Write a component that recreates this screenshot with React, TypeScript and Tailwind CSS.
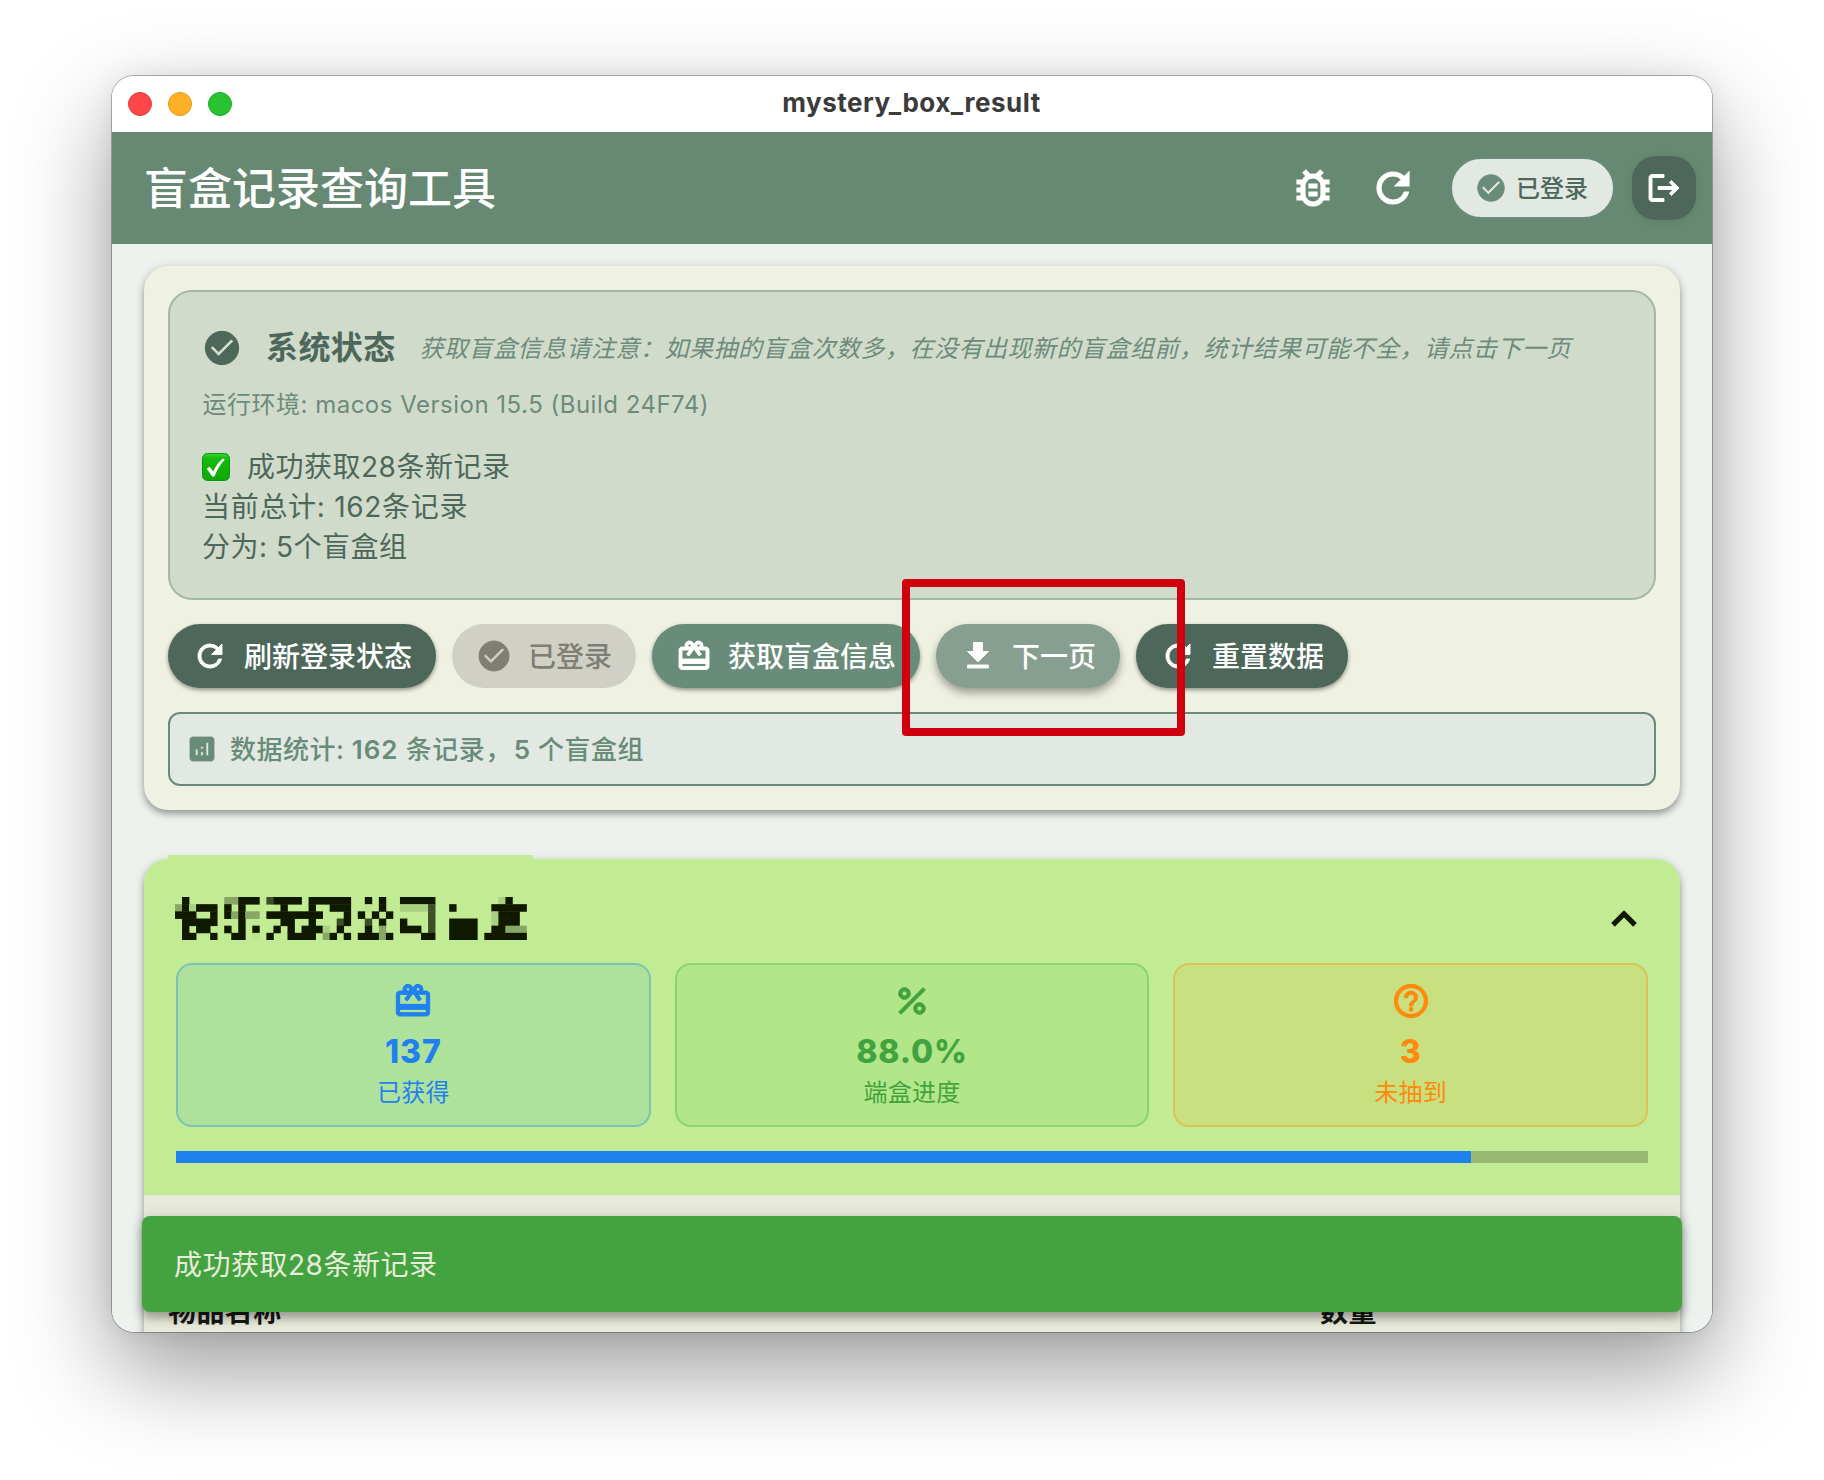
import type { ReactNode } from "react";
import {
  MdAnalytics,
  MdCardGiftcard,
  MdCheckCircle,
  MdDownload,
  MdHelpOutline,
  MdKeyboardArrowUp,
  MdLogout,
  MdOutlineBugReport,
  MdPercent,
  MdRefresh,
} from "react-icons/md";

type Shade = "d" | "s" | "m" | "l" | "f";

const SHADES: Record<Shade, string> = {
  d: "#101800",
  s: "#3c4e27",
  m: "#88a766",
  l: "#a8d080",
  f: "#bae48d",
};

/* Outlines the glyph to thicken it, leaving its invisible bounding path alone. */
const HEAVY = "stroke-current stroke-[0.6] [&>path[fill=none]]:stroke-none";

/* Runs of blocks in the redacted group name: row, column, length, shade. */
const BLOCKS: [number, number, number, Shade][] = [
  [0, 1, 1, "d"], [0, 7, 2, "m"], [0, 9, 3, "d"], [0, 13, 1, "s"], [0, 14, 4, "d"], [0, 19, 6, "d"],
  [0, 27, 1, "d"], [0, 29, 1, "d"], [0, 32, 5, "d"], [0, 46, 1, "l"], [0, 47, 1, "d"],
  [1, 0, 1, "m"], [1, 1, 1, "d"], [1, 2, 1, "l"], [1, 3, 3, "d"], [1, 7, 1, "d"], [1, 9, 1, "d"],
  [1, 15, 1, "d"], [1, 19, 1, "d"], [1, 22, 3, "d"], [1, 27, 1, "f"], [1, 29, 1, "d"], [1, 32, 4, "l"],
  [1, 36, 1, "s"], [1, 39, 1, "d"], [1, 45, 5, "d"],
  [2, 0, 3, "d"], [2, 5, 1, "d"], [2, 7, 1, "d"], [2, 8, 1, "m"], [2, 9, 1, "d"], [2, 10, 2, "m"],
  [2, 13, 8, "d"], [2, 24, 1, "d"], [2, 26, 1, "d"], [2, 28, 1, "d"], [2, 30, 1, "d"], [2, 36, 1, "s"],
  [2, 45, 1, "l"], [2, 46, 3, "d"],
  [3, 1, 5, "d"], [3, 9, 1, "d"], [3, 15, 2, "d"], [3, 19, 1, "d"], [3, 23, 1, "s"], [3, 24, 1, "d"],
  [3, 27, 1, "s"], [3, 29, 1, "d"], [3, 32, 1, "d"], [3, 36, 1, "s"], [3, 39, 4, "d"], [3, 45, 1, "l"],
  [3, 46, 3, "d"],
  [4, 1, 1, "d"], [4, 3, 2, "d"], [4, 7, 1, "d"], [4, 9, 1, "d"], [4, 11, 1, "d"], [4, 14, 1, "d"],
  [4, 16, 1, "d"], [4, 18, 3, "d"], [4, 21, 1, "l"], [4, 23, 1, "d"], [4, 27, 1, "d"], [4, 29, 1, "m"],
  [4, 32, 3, "d"], [4, 36, 1, "s"], [4, 39, 4, "d"], [4, 45, 2, "d"], [4, 47, 2, "m"], [4, 49, 1, "m"],
  [5, 1, 2, "d"], [5, 5, 1, "d"], [5, 8, 2, "d"], [5, 11, 1, "f"], [5, 13, 1, "d"], [5, 16, 4, "d"],
  [5, 21, 1, "m"], [5, 22, 1, "d"], [5, 24, 1, "d"], [5, 26, 3, "d"], [5, 29, 1, "m"], [5, 30, 1, "d"],
  [5, 35, 2, "d"], [5, 39, 4, "d"], [5, 44, 6, "d"],
];

function MosaicName() {
  return (
    <svg className="h-[43px] w-[351.5px]" viewBox="0 0 50 6" preserveAspectRatio="none" aria-hidden="true">
      {BLOCKS.map(([row, col, len, shade]) => (
        <rect key={`${row}-${col}`} x={col} y={row} width={len + 0.05} height={1.06} fill={SHADES[shade]} />
      ))}
    </svg>
  );
}

function CheckMark() {
  return (
    <svg className="h-7 w-7 shrink-0" viewBox="0 0 28 28" aria-hidden="true">
      <defs>
        <linearGradient id="mark" x1="0" y1="0" x2="0" y2="1">
          <stop offset="0" stopColor="#3fd138" />
          <stop offset="0.18" stopColor="#12bd0c" />
          <stop offset="1" stopColor="#12a606" />
        </linearGradient>
      </defs>
      <rect x="0.5" y="0.5" width="27" height="27" rx="5" fill="url(#mark)" stroke="#0d9413" />
      <path d="M4.800 15.700l2.800-2 3.700 4.700c2.200-5.200 5.300-9.600 9.500-13l2 1C18.400 11.200 15 16.700 12.500 23.400h-2.300z" fill="#fff" />
    </svg>
  );
}

function ActionButton({ icon, label, tone }: { icon: ReactNode; label: string; tone: string }) {
  return (
    <button className={`flex h-16 items-center gap-4 rounded-[32px] px-6 text-[28px] leading-none font-medium ${tone}`}>
      <span className="text-4xl leading-none">{icon}</span>
      <span className="pt-[2px] whitespace-nowrap">{label}</span>
    </button>
  );
}

function StatCard({ icon, value, label, tone }: { icon: ReactNode; value: string; label: string; tone: string }) {
  return (
    <div className={`flex h-[164px] flex-1 flex-col items-center rounded-2xl border-2 pt-4 ${tone}`}>
      <span className="text-[40px] leading-none">{icon}</span>
      <span className="mt-[9px] text-[32px] leading-[44px] font-extrabold tracking-[0.9px]">{value}</span>
      <span className="text-2xl leading-[38px] tracking-[0.3px]">{label}</span>
    </div>
  );
}

export default function App() {
  return (
    <div className="h-[1480px] w-[1824px] overflow-hidden bg-white px-28 pt-[76px] font-['Inter','Noto_Sans_CJK_SC',sans-serif]">
      <div className="relative h-[1256px] w-[1600px] rounded-[22px] shadow-[0_0_0_1px_rgba(0,0,0,0.28),0_38px_96px_rgba(0,0,0,0.4),0_0_24px_rgba(0,0,0,0.07)]">
        <div className="flex h-full flex-col overflow-hidden rounded-[22px] bg-[#edf2ee]">
          <div className="grid h-14 shrink-0 grid-cols-3 items-center bg-white px-4">
            <div className="flex gap-4">
              <span className="h-6 w-6 rounded-full border border-[#e0383c] bg-[#ff4649]" />
              <span className="h-6 w-6 rounded-full border border-[#e0951a] bg-[#ffb024]" />
              <span className="h-6 w-6 rounded-full border border-[#1fa526] bg-[#29c331]" />
            </div>
            <div className="pr-px pb-[2px] text-center text-[26px] leading-none font-bold tracking-[0.5px] text-[#3b3b3b]">mystery_box_result</div>
          </div>

          <header className="flex h-28 shrink-0 items-center bg-[#678973] pr-4 pl-8 text-white">
            <h1 className="flex-1 pt-[2px] text-[44px] leading-none font-medium">盲盒记录查询工具</h1>
            <MdOutlineBugReport className={`h-12 w-12 ${HEAVY}`} />
            <MdRefresh className={`ml-8 h-12 w-12 ${HEAVY}`} />
            <div className="ml-[33px] flex h-[62px] w-[165px] items-center justify-center gap-[9px] rounded-[31px] border-2 border-[#698c7a] bg-[#e1e9e2] pr-[2px] text-2xl font-medium text-[#4d685a]">
              <MdCheckCircle className={`h-8 w-8 text-[#698c7a] ${HEAVY}`} />
              <span className="pt-px whitespace-nowrap">已登录</span>
            </div>
            <div className="ml-[17px] flex h-16 w-16 items-center justify-center rounded-3xl bg-[#4d685a] shadow-[0_2px_8px_rgba(77,104,90,0.3)]">
              <MdLogout className={`h-9 w-9 ${HEAVY}`} />
            </div>
          </header>

          <main className="flex flex-col px-8 pt-[22px]">
            <section className="flex h-[544px] flex-col rounded-3xl bg-[#eff1e2] p-6 shadow-[0_4px_6px_rgba(0,0,0,0.28),0_2px_12px_rgba(0,0,0,0.14)]">
              <div className="h-[310px] shrink-0 rounded-3xl border-2 border-[#a5b8a6] bg-[#d1dbcb] p-8 text-[#4d685a]">
                <div className="flex h-12 items-center">
                  <MdCheckCircle className={`h-10 w-10 ${HEAVY}`} />
                  <h2 className="ml-6 text-[32px] leading-none font-bold tracking-[0.4px]">系统状态</h2>
                  <p className="ml-6 pt-[2px] text-2xl leading-none tracking-[0.5px] whitespace-nowrap text-[#6c8b7c] italic">
                    获取盲盒信息请注意：如果抽的盲盒次数多，在没有出现新的盲盒组前，统计结果可能不全，请点击下一页
                  </p>
                </div>
                <p className="mt-4 pl-[0.5px] text-2xl leading-[34px] tracking-[0.5px] text-[#6c8b7c]">
                  运行环境: macos Version 15.5 (Build 24F74)
                </p>
                <div className="mt-[25px] text-[28px] leading-10 tracking-[0.5px]">
                  <div className="flex items-center gap-[17px]">
                    <CheckMark />
                    <p>成功获取28条新记录</p>
                  </div>
                  <p className="tracking-[0.7px]">当前总计: 162条记录</p>
                  <p>分为: 5个盲盒组</p>
                </div>
              </div>

              <div className="mt-6 flex gap-4">
                <ActionButton icon={<MdRefresh className={HEAVY} />} label="刷新登录状态" tone="bg-[#4d685a] text-white shadow-[0_2px_4px_rgba(0,0,0,0.4)]" />
                <ActionButton icon={<MdCheckCircle className={HEAVY} />} label="已登录" tone="bg-[#d0d0c7] text-[#7e7e75]" />
                <ActionButton icon={<MdCardGiftcard className={HEAVY} />} label="获取盲盒信息" tone="bg-[#698c7a] text-white shadow-[0_2px_4px_rgba(0,0,0,0.4)]" />
                <ActionButton icon={<MdDownload className={HEAVY} />} label="下一页" tone="bg-[#869f91] text-white shadow-[0_5px_8px_rgba(0,0,0,0.35)]" />
                <ActionButton icon={<MdRefresh className={HEAVY} />} label="重置数据" tone="bg-[#4d685a] text-white shadow-[0_2px_4px_rgba(0,0,0,0.4)]" />
              </div>

              <div className="mt-6 flex h-[74px] items-center gap-3 rounded-xl border-2 border-[#698c7a] bg-[#e1e9e2] px-4 text-[26px] font-medium tracking-[0.5px] text-[#698c7a]">
                <MdAnalytics className={`h-8 w-8 ${HEAVY}`} />
                <p className="pt-px">
                  数据统计: <span className="font-semibold tracking-[0.9px]">162</span> 条记录，
                  <span className="ml-[2px] font-semibold">5</span> 个盲盒组
                </p>
              </div>
            </section>

            <section className="relative mt-[49px] h-[560px] rounded-3xl bg-[#e9ebda] shadow-[0_4px_6px_rgba(0,0,0,0.28),0_2px_12px_rgba(0,0,0,0.14)]">
              <div className="absolute -top-1 left-6 h-2 w-[365px] bg-[#c2ec93]" />
              <div className="h-[336px] rounded-t-3xl bg-[#c2ec93] px-8">
                <div className="-ml-px flex h-[104px] items-center justify-between pt-[15px]">
                  <MosaicName />
                  <MdKeyboardArrowUp className={`h-12 w-12 text-[#101800] ${HEAVY}`} />
                </div>
                <div className="flex gap-6">
                  <StatCard icon={<MdCardGiftcard className={HEAVY} />} value="137" label="已获得" tone="border-[#7cc3b4] bg-[#aee29c] text-[#1f80ef]" />
                  <StatCard icon={<MdPercent className={HEAVY} />} value="88.0%" label="端盒进度" tone="border-[#8fd273] bg-[#b2e688] text-[#41a33f]" />
                  <StatCard icon={<MdHelpOutline className={HEAVY} />} value="3" label="未抽到" tone="border-[#dbc258] bg-[#c9e081] text-[#ff8a0c]" />
                </div>
                <div className="mt-6 h-3 bg-[#98b972]">
                  <div className="h-full w-[88%] bg-[#1f80ef]" />
                </div>
              </div>
              <div className="flex px-6 pt-[97px] text-[28px] leading-10 font-bold tracking-[0.4px] text-[#161813]">
                <span className="w-[1152px]">物品名称</span>
                <span>数量</span>
              </div>
            </section>
          </main>
        </div>

        <div className="absolute inset-x-[30px] bottom-5 flex h-24 items-center rounded-lg bg-[#42a340] px-8 pt-px text-[28px] tracking-[0.5px] text-[#e9ecda] shadow-[0_6px_10px_rgba(0,0,0,0.28),0_2px_18px_rgba(0,0,0,0.14)] [clip-path:inset(-30px_-28px_-20px_-28px)]">
          成功获取28条新记录
        </div>
        <div className="absolute top-[503px] left-[790px] h-[157px] w-[283px] rounded-[4px] border-8 border-[#d1000f]" />
      </div>
    </div>
  );
}
